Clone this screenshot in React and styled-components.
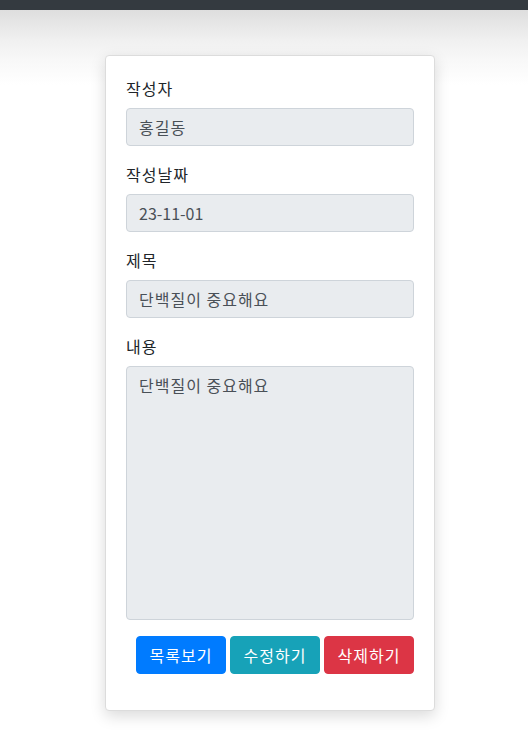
import React from 'react';
import styled, { createGlobalStyle } from 'styled-components';

const GlobalStyle = createGlobalStyle`
  * { box-sizing: border-box; }
  body {
    margin: 0;
    font-family: "Noto Sans CJK KR", "Noto Sans", sans-serif;
    font-size: 16px;
    line-height: 1.5;
    letter-spacing: 1px;
    color: #212529;
    background: #fff;
  }
`;

const NavBar = styled.div`
  height: 10px;
  background: #343a40;
`;

const Page = styled.div`
  min-height: 733px;
  padding: 45px 0 32px 105px;
  background: linear-gradient(to bottom, #dedede 0px, #f0f0f0 30px, #f8f8f8 50px, #fff 75px);
`;

const Card = styled.div`
  width: 330px;
  background: #fff;
  border: 1px solid #dcdcdc;
  border-radius: 4px;
  box-shadow: 0 5px 15px rgba(0, 0, 0, 0.15);
  padding: 20px;
`;

const Group = styled.div`
  margin-bottom: 16px;
`;

const Label = styled.label`
  display: block;
  margin-bottom: 8px;
  line-height: 24px;
`;

const Field = styled.div`
  height: ${(p) => p.h || 38}px;
  padding: 6px 12px;
  line-height: 24px;
  letter-spacing: ${(p) => (p.$tight ? 0 : 1)}px;
  color: #495057;
  background: #e9ecef;
  border: 1px solid #ced4da;
  border-radius: 4px;
`;

const Actions = styled.div`
  display: flex;
  justify-content: flex-end;
  gap: 4px;
  margin-bottom: 16px;
`;

const colors = {
  primary: '#007bff',
  info: '#17a2b8',
  danger: '#dc3545',
};

const Button = styled.button`
  width: 90px;
  height: 38px;
  padding: 6px 0;
  font-family: inherit;
  font-size: 16px;
  letter-spacing: 1px;
  line-height: 24px;
  color: #fff;
  background: ${(p) => colors[p.variant]};
  border: 1px solid ${(p) => colors[p.variant]};
  border-radius: 4px;
  cursor: pointer;
`;

const fields = [
  { label: '작성자', value: '홍길동' },
  { label: '작성날짜', value: '23-11-01', tight: true },
  { label: '제목', value: '단백질이 중요해요' },
  { label: '내용', value: '단백질이 중요해요', h: 254 },
];

export default function App() {
  return (
    <>
      <GlobalStyle />
      <NavBar />
      <Page>
        <Card>
          {fields.map((f) => (
            <Group key={f.label}>
              <Label>{f.label}</Label>
              <Field h={f.h} $tight={f.tight}>{f.value}</Field>
            </Group>
          ))}
          <Actions>
            <Button variant="primary" type="button">목록보기</Button>
            <Button variant="info" type="button">수정하기</Button>
            <Button variant="danger" type="button">삭제하기</Button>
          </Actions>
        </Card>
      </Page>
    </>
  );
}
